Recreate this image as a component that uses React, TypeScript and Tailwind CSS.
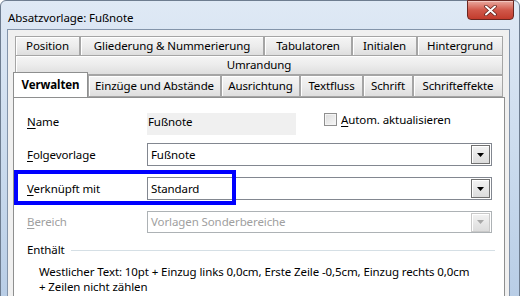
import React from 'react';

const font = "font-['Noto_Sans',sans-serif] text-[11.5px] tracking-[-0.1px] leading-none";

function Tab({ label, w, className = '' }: { label: string; w: string; className?: string }) {
  return (
    <div
      className={`${w} h-full flex items-center justify-center border border-[#a5a5a5] bg-gradient-to-b from-[#f5f5f5] via-[#ececec] to-[#dedede] shadow-[inset_1px_1px_0_#ffffff] text-black ${className}`}
    >
      {label}
    </div>
  );
}

function Mnemonic({ first, rest, disabled }: { first: string; rest: string; disabled?: boolean }) {
  return (
    <span className={disabled ? 'text-[#a0a0a0]' : 'text-black'}>
      <span className="underline underline-offset-2">{first}</span>
      {rest}
    </span>
  );
}

function Combo({ value, disabled, h = 'h-[23px]' }: { value: string; disabled?: boolean; h?: string }) {
  return (
    <div
      className={`w-[345px] ${h} flex items-center border ${disabled ? 'border-[#adb2b5] text-[#a0a0a0]' : 'border-[#828790] text-black'} bg-white`}
    >
      <span className="flex-1 pl-[3px]">{value}</span>
      <div
        className={`w-[19px] h-[19px] mr-[1px] flex items-center justify-center border ${disabled ? 'border-[#c9c9c9]' : 'border-[#707070]'} bg-gradient-to-b from-[#f3f3f3] to-[#dcdcdc] shadow-[inset_1px_1px_0_#ffffff]`}
      >
        <svg width="7" height="4" viewBox="0 0 7 4">
          <path d="M0 0h7L3.5 4z" fill={disabled ? '#a8a8a8' : '#000'} />
        </svg>
      </div>
    </div>
  );
}

export default function App() {
  return (
    <div className={`w-[520px] h-[296px] overflow-hidden bg-white ${font}`}>
      {/* window frame */}
      <div className="w-[520px] h-[300px] rounded-t-[6px] border border-[#6e7d90] bg-gradient-to-b from-[#dfe9f5] via-[#ccdcee] to-[#b8cde6] flex flex-col">
        {/* title bar */}
        <div className="h-[28px] flex items-start">
          <div className="flex-1 pl-[7px] pt-[11px] text-black">Absatzvorlage: Fußnote</div>
          <div className="w-[47px] h-[20px] mr-[5px] -mt-[1px] rounded-b-[4px] border border-[#6b2620] bg-gradient-to-b from-[#e8a89f] via-[#d1584a] to-[#c23b2c] shadow-[inset_0_1px_0_#f2c6bf] flex items-center justify-center">
            <svg width="13" height="11" viewBox="0 0 13 11">
              <path d="M2 1.5l9 8M11 1.5l-9 8" stroke="#5a1d18" strokeWidth="3.4" strokeLinecap="round" />
              <path d="M2 1.5l9 8M11 1.5l-9 8" stroke="#ffffff" strokeWidth="2" strokeLinecap="round" />
            </svg>
          </div>
        </div>

        {/* client area */}
        <div className="flex-1 ml-[6px] mr-[9px] border border-[#8394aa] bg-[#f0f0f0] pl-[5px] pr-[3px] pt-[6px]">
          {/* tab rows */}
          <div className="flex flex-col">
            <div className="h-[20px] flex pl-[2px]">
              <Tab label="Position" w="w-[65px]" />
              <Tab label="Gliederung & Nummerierung" w="w-[184px]" />
              <Tab label="Tabulatoren" w="w-[88px]" />
              <Tab label="Initialen" w="w-[65px]" />
              <Tab label="Hintergrund" w="w-[86px]" />
            </div>
            <div className="h-[19px] flex pl-[2px]">
              <Tab label="Umrandung" w="w-[488px]" className="border-t-0" />
            </div>
            <div className="h-[22px] flex items-end">
              <div className="relative z-10 w-[75px] h-[25px] -mt-[3px] self-start flex items-center justify-center border border-[#8e8f8f] border-b-0 bg-white font-bold pb-[1px]">
                Verwalten
              </div>
              <div className="h-[22px] flex">
                <Tab label="Einzüge und Abstände" w="w-[133px]" />
                <Tab label="Ausrichtung" w="w-[79px]" />
                <Tab label="Textfluss" w="w-[63px]" />
                <Tab label="Schrift" w="w-[50px]" />
                <Tab label="Schrifteffekte" w="w-[90px]" />
              </div>
            </div>
          </div>

          {/* panel */}
          <div className="relative w-[492px] h-[200px] border border-[#8e8f8f] bg-white pt-[15px] pl-[13px]">
            <div className="flex items-start h-[22px]">
              <div className="w-[120px] pt-[3px]">
                <Mnemonic first="N" rest="ame" />
              </div>
              <div className="w-[149px] h-[22px] bg-[#f0f0f0] pl-[1px] pt-[3px]">Fußnote</div>
              <div className="ml-[28px] w-[13px] h-[13px] border border-[#8f8f8f] bg-gradient-to-br from-[#dcdcdc] to-[#f7f7f7] shadow-[inset_0_0_0_1px_#f4f4f4]" />
              <div className="ml-[4px] pt-[1px]">
                <Mnemonic first="A" rest="utom. aktualisieren" />
              </div>
            </div>

            <div className="flex items-center mt-[8px]">
              <div className="w-[120px]">
                <Mnemonic first="F" rest="olgevorlage" />
              </div>
              <Combo value="Fußnote" />
            </div>

            <div className="flex items-center mt-[11px]">
              <div className="w-[120px]">
                <Mnemonic first="V" rest="erknüpft mit" />
              </div>
              <Combo value="Standard" />
            </div>

            <div className="flex items-center mt-[11px]">
              <div className="w-[120px]">
                <Mnemonic first="B" rest="ereich" disabled />
              </div>
              <Combo value="Vorlagen Sonderbereiche" disabled h="h-[22px]" />
            </div>

            <div className="flex items-center mt-[11px] h-[12px]">
              <span>Enthält</span>
              <div className="ml-[6px] w-[424px] h-px bg-[#d5dfe5]" />
            </div>

            <div className="pl-[12px] mt-[8px] leading-[15px]">
              <div>Westlicher Text: 10pt + Einzug links 0,0cm, Erste Zeile -0,5cm, Einzug rechts 0,0cm</div>
              <div>+ Zeilen nicht zählen</div>
            </div>

            {/* highlight annotation */}
            <div className="absolute left-0 top-[72px] w-[222px] h-[35px] border-[4px] border-[#0000ff]" />
          </div>
        </div>
      </div>
    </div>
  );
}
